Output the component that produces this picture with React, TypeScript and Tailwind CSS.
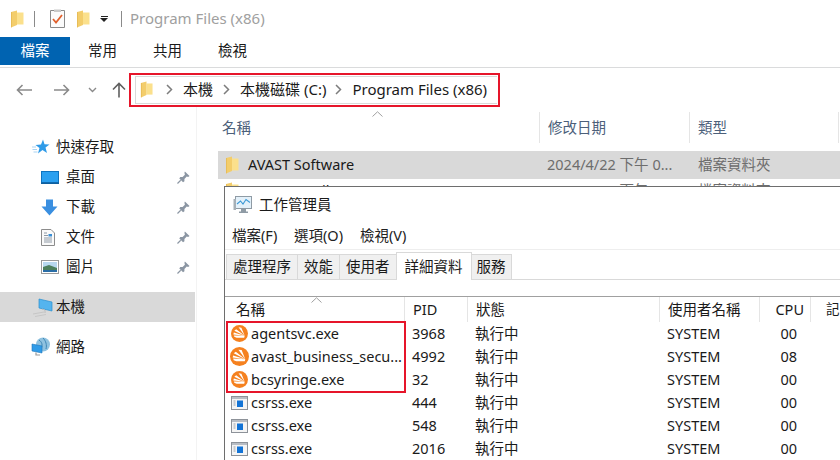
import React from 'react';

const FONT = 'font-["Noto_Sans","Noto_Sans_CJK_TC",sans-serif]';

const Folder = ({ className = '' }: { className?: string }) => (
  <svg viewBox="0 0 14 18" className={className}>
    <path d="M7 2.5 H13.5 V14.5 H7 Z" fill="#fbe08c" />
    <path d="M1 2 L7 0.5 V15 L1 17.5 Z" fill="#f3cd6b" />
    <path d="M1 2 H2 V17 L1 17.5 Z" fill="#e8bd58" />
  </svg>
);

const Checklist = () => (
  <svg viewBox="0 0 15 19" className="h-[19px] w-[15px]">
    <path d="M0.5 1.5 H14.5 V18.5 H0.5 Z" fill="#fbfbfb" stroke="#8a8a8a" />
    <path d="M4 0.5 H11 V3 H4 Z" fill="#c9c9c9" />
    <path d="M3 10 L6 13.5 L12 6" fill="none" stroke="#e0602c" strokeWidth="1.8" />
  </svg>
);

const Pin = () => (
  <svg viewBox="0 0 14 14" className="h-[13px] w-[13px]">
    <path d="M8.5 0.5 L13.5 5.5 L12 6.5 L10.5 6 L8 8.5 L8 11 L6.5 12 L2.5 8 L3.5 6.5 L6 6.5 L8.5 4 L8 2 Z" fill="#8b96a3" />
    <path d="M4 10 L0.5 13.5" stroke="#8b96a3" strokeWidth="1.3" />
  </svg>
);

const Chevron = () => (
  <svg viewBox="0 0 7 11" className="h-[11px] w-[7px]">
    <path d="M1 1 L5.5 5.5 L1 10" fill="none" stroke="#7d7d7d" strokeWidth="1.5" />
  </svg>
);

const SortCaret = () => (
  <svg viewBox="0 0 11 6" className="h-[6px] w-[11px]">
    <path d="M0.5 5.5 L5.5 0.8 L10.5 5.5" fill="none" stroke="#a0a0a0" />
  </svg>
);

const Arrow = ({ dir, dark }: { dir: 'left' | 'right' | 'up'; dark?: boolean }) => {
  const color = dark ? '#5f5f5f' : '#8a8a8a';
  if (dir === 'up') {
    return (
      <svg viewBox="0 0 14 16" className="h-4 w-[14px]">
        <path d="M7 15.5 V1.5 M1 7.5 L7 1.5 L13 7.5" fill="none" stroke={color} strokeWidth="1.6" />
      </svg>
    );
  }
  const d = dir === 'left' ? 'M16 6 H1.5 M6.5 1 L1.5 6 L6.5 11' : 'M0 6 H14.5 M9.5 1 L14.5 6 L9.5 11';
  return (
    <svg viewBox="0 0 16 12" className="h-3 w-4">
      <path d={d} fill="none" stroke={color} strokeWidth="1.6" />
    </svg>
  );
};

const Star = () => (
  <svg viewBox="0 0 18 16" className="h-4 w-[18px]">
    <path d="M11 0.5 L12.5 5.2 L17.5 5.5 L13.5 8.6 L15 14 L10.5 11 L6 14.5 L7.5 9 L3.5 6 L9 5.4 Z" fill="#2f9be8" />
    <path d="M0 8 H4 M0.5 10.5 H5 M1.5 13 H5.5" stroke="#a9d3f2" />
  </svg>
);

const Desktop = () => (
  <svg viewBox="0 0 18 13" className="h-[13px] w-[18px]">
    <rect width="18" height="13" fill="#1a8ce0" />
    <rect x="0.5" y="0.5" width="17" height="11" fill="#2ba0f0" stroke="#0f74c0" />
    <rect x="0" y="11.5" width="18" height="1.5" fill="#0e5f9e" />
  </svg>
);

const Download = () => (
  <svg viewBox="0 0 17 17" className="h-[17px] w-[17px]">
    <path d="M5 0.5 H12 V7.5 H16.5 L8.5 16.5 L0.5 7.5 H5 Z" fill="#3a8fe0" />
  </svg>
);

const Doc = () => (
  <svg viewBox="0 0 14 17" className="h-[17px] w-[14px]">
    <path d="M0.5 0.5 H10 L13.5 4 V16.5 H0.5 Z" fill="#fafafa" stroke="#8c8c8c" />
    <path d="M3 4 H6 M3 6.5 H7 M3 9 H11 M3 11 H11 M3 13 H11" stroke="#8f9aa6" />
    <rect x="7.5" y="5" width="3.5" height="2.5" fill="#3b8fd6" />
  </svg>
);

const Pictures = () => (
  <svg viewBox="0 0 18 14" className="h-[14px] w-[18px]">
    <rect x="0.5" y="0.5" width="17" height="13" fill="#fff" stroke="#9a9a9a" />
    <rect x="2" y="2" width="14" height="10" fill="#b8d8ef" />
    <path d="M2 7 L8 5 L16 8 V12 H2 Z" fill="#4d7f5c" />
    <path d="M2 10 H16 V12 H2 Z" fill="#2a6da6" />
  </svg>
);

const ThisPc = () => (
  <svg viewBox="0 0 21 19" className="h-[19px] w-[21px]">
    <path d="M7 1 L20 4 V13 L7 10 Z" fill="#55b4ee" stroke="#2a8fd0" strokeWidth="0.7" />
    <path d="M10 11 L13 12 V15" fill="none" stroke="#bcbcbc" />
    <path d="M1 16 L12 14 M3 18.5 L14 16.5" stroke="#c6c6c6" />
  </svg>
);

const Network = () => (
  <svg viewBox="0 0 20 20" className="h-5 w-5">
    <circle cx="12" cy="7.5" r="7" fill="#8fc2e0" />
    <path d="M8 3 C11 5 12 8 10 12 M12 1 C15 4 16 8 15 12" fill="none" stroke="#3d86b5" />
    <path d="M1 7 L11 9 V16 L1 14 Z" fill="#2f9be8" stroke="#1b76bb" strokeWidth="0.6" />
    <path d="M5 15.5 V18 H9" fill="none" stroke="#9a9a9a" strokeWidth="1.2" />
  </svg>
);

const TaskIcon = () => (
  <svg viewBox="0 0 19 18" className="h-[18px] w-[19px]">
    <rect x="2.5" y="0.5" width="16" height="12" fill="#e4f1fa" stroke="#8f9ba5" />
    <path d="M4 8 L7.5 5 L10 8 L13 3.5 L17 6.5" fill="none" stroke="#3d9ad6" strokeWidth="1.1" />
    <rect x="0.5" y="3" width="2.5" height="11" fill="#a6afb6" />
    <path d="M8 13 H13 V15.5 H15 V17 H6 V15.5 H8 Z" fill="#8f9ba5" />
  </svg>
);

const Avast = ({ big }: { big?: boolean }) => (
  <svg viewBox="0 0 18 18" className={big ? 'h-[19px] w-[19px]' : 'h-[17px] w-[17px]'}>
    <circle cx="9" cy="9" r="9" fill="#f5811f" />
    <path d="M8 2.5 L11 2.8 L14.5 11.5 Z M3.5 6 L5.5 4.5 L14.5 11.5 Z M2.5 10 L3 8 L14.5 11.5 Z M3.5 12.5 L3 11 L14.5 11.5 L14 13.5 L6 13.5 Z" fill="#fff" />
  </svg>
);

const ProcessIcon = () => (
  <svg viewBox="0 0 17 14" className="h-[14px] w-[17px]">
    <rect x="0.5" y="0.5" width="16" height="13" fill="#f4f4f4" stroke="#8d9299" />
    <path d="M1 1 H16 V3 H1 Z" fill="#b8bdc4" />
    <rect x="6" y="4.5" width="6" height="6.5" fill="#1273d6" />
    <path d="M2.5 5 H4.5 M2.5 7 H4.5 M2.5 9 H4.5" stroke="#9aa0a8" />
  </svg>
);

const navItems = [
  { label: '桌面', icon: <Desktop /> },
  { label: '下載', icon: <Download /> },
  { label: '文件', icon: <Doc /> },
  { label: '圖片', icon: <Pictures /> },
];

const processes = [
  { name: 'agentsvc.exe', pid: '3968', cpu: '00', icon: <Avast /> },
  { name: 'avast_business_secu...', pid: '4992', cpu: '08', icon: <Avast big /> },
  { name: 'bcsyringe.exe', pid: '32', cpu: '00', icon: <Avast /> },
  { name: 'csrss.exe', pid: '444', cpu: '00', icon: <ProcessIcon /> },
  { name: 'csrss.exe', pid: '548', cpu: '00', icon: <ProcessIcon /> },
  { name: 'csrss.exe', pid: '2016', cpu: '00', icon: <ProcessIcon /> },
];

const tmTabs = ['處理程序', '效能', '使用者'];
const GRID = 'grid grid-cols-[179px_63px_192px_100px_51px_1fr]';

const TaskManager = () => (
  <div className="absolute left-[224px] top-[186px] flex h-[274px] w-[616px] flex-col border-l border-t border-[#6e6e6e] bg-white text-[14.5px] text-[#1a1a1a]">
    <div className="flex h-[36px] items-center gap-[7px] pl-2">
      <TaskIcon />
      <span>工作管理員</span>
    </div>
    <div className="flex h-[26px] items-center gap-[15px] pl-[7px] text-[#222]">
      <span className="w-[47px] whitespace-nowrap">檔案(F)</span>
      <span className="w-[51px] whitespace-nowrap">選項(O)</span>
      <span className="whitespace-nowrap">檢視(V)</span>
    </div>
    <div className="flex h-[31px] items-end border-b border-t border-b-[#d9d9d9] border-t-[#eeeeee] pl-px pt-[4px]">
      {tmTabs.map(t => (
        <div key={t} className="-mr-px flex h-[25px] items-center border border-b-0 border-[#d9d9d9] bg-[#f0f0f0] px-[6px]">{t}</div>
      ))}
      <div className="relative z-10 -mb-px -mr-px flex h-[28px] items-center border border-b-0 border-[#d9d9d9] bg-white px-2">詳細資料</div>
      <div className="flex h-[25px] items-center border border-b-0 border-[#d9d9d9] bg-[#f0f0f0] px-[5px]">服務</div>
    </div>
    <div className="h-[16px]" />
    <div className={`${GRID} h-[26px] items-center border-t border-[#a0a0a0]`}>
      <div className="relative flex h-full items-center pl-[11px]">
        名稱
        <span className="absolute left-[86px] top-0 flex"><SortCaret /></span>
      </div>
      <div className="flex h-full items-center border-l border-[#e5e5e5] pl-2">PID</div>
      <div className="flex h-full items-center border-l border-[#e5e5e5] pl-2">狀態</div>
      <div className="flex h-full items-center border-l border-[#e5e5e5] pl-2">使用者名稱</div>
      <div className="flex h-full items-center justify-end border-l border-[#e5e5e5] pr-[6px]">CPU</div>
      <div className="flex h-full items-center border-l border-[#e5e5e5] pl-[15px] text-[13.5px]">記</div>
    </div>
    <div className="relative">
      {processes.map((p, i) => (
        <div key={i} className={`${GRID} h-[23px] items-center`}>
          <div className="flex items-center">
            <span className="flex w-[26px] justify-center pl-[2px]">{p.icon}</span>
            <span className="whitespace-nowrap">{p.name}</span>
          </div>
          <div className="pl-[8px]">{p.pid}</div>
          <div className="pl-[8px]">執行中</div>
          <div className="pl-[8px]">SYSTEM</div>
          <div className="pr-[13px] text-right">{p.cpu}</div>
          <div />
        </div>
      ))}
      <div className="absolute left-[1px] top-[-1px] h-[72px] w-[180px] border-2 border-[#e6152a]" />
    </div>
  </div>
);

export default function App() {
  return (
    <div className={`${FONT} relative flex h-[460px] w-[840px] flex-col overflow-hidden bg-white text-[#1a1a1a]`}>
      <div className="flex h-[37px] items-center">
        <Folder className="ml-[10px] h-[18px] w-[14px]" />
        <div className="ml-[10px] h-[16px] w-px bg-[#8a8a8a]" />
        <div className="ml-[15px] flex"><Checklist /></div>
        <Folder className="ml-[11px] h-[18px] w-[14px]" />
        <span className="ml-[10px] flex flex-col items-center gap-px">
          <span className="h-px w-[7px] bg-[#222]" />
          <span className="h-0 w-0 border-x-[4px] border-t-[4px] border-x-transparent border-t-[#222]" />
        </span>
        <div className="ml-[13px] h-[16px] w-px bg-[#8a8a8a]" />
        <span className="ml-2 text-[15px] text-[#a0a0a0]">Program Files (x86)</span>
      </div>

      <div className="flex h-[31px] items-start border-b border-[#dadbdc] text-[14.5px]">
        <div className="flex h-[28px] w-[70px] items-center justify-center bg-[#0063b1] text-white">檔案</div>
        <div className="ml-[18px] flex h-[28px] items-center">常用</div>
        <div className="ml-[36px] flex h-[28px] items-center">共用</div>
        <div className="ml-[36px] flex h-[28px] items-center">檢視</div>
      </div>

      <div className="flex h-[39px] items-center pt-[5px]">
        <div className="ml-[16px] flex"><Arrow dir="left" /></div>
        <div className="ml-[22px] flex"><Arrow dir="right" /></div>
        <svg viewBox="0 0 9 6" className="ml-[18px] h-[6px] w-[9px]">
          <path d="M1 1 L4.5 4.5 L8 1" fill="none" stroke="#8a8a8a" strokeWidth="1.4" />
        </svg>
        <div className="ml-[15px] flex"><Arrow dir="up" dark /></div>
        <div className="ml-[3px] h-[34px] w-[371px] border-2 border-[#e6152a] p-px pl-[4px]">
          <div className="flex h-full items-center border border-r-0 border-[#d9d9d9] pb-[2px] pl-[4px] text-[15px]">
            <Folder className="h-[17px] w-[13px]" />
            <span className="ml-[13px] flex"><Chevron /></span>
            <span className="ml-[10px]">本機</span>
            <span className="ml-[10px] flex"><Chevron /></span>
            <span className="ml-[10px] whitespace-nowrap">本機磁碟 (C:)</span>
            <span className="ml-[9px] flex"><Chevron /></span>
            <span className="ml-[10px] whitespace-nowrap">Program Files (x86)</span>
          </div>
        </div>
      </div>

      <div className="flex min-h-0 flex-1">
        <aside className="w-[197px] shrink-0 border-r border-[#f3f3f3] pt-[25px] text-[14.5px]">
          <div className="flex h-[30px] items-center pl-[32px]">
            <Star />
            <span className="ml-[6px]">快速存取</span>
          </div>
          {navItems.map(item => (
            <div key={item.label} className="flex h-[30px] items-center pl-[41px]">
              <span className="flex w-[25px] items-center">{item.icon}</span>
              <span className="flex-1">{item.label}</span>
              <span className="mr-[6px] flex"><Pin /></span>
            </div>
          ))}
          <div className="mt-[10px] flex h-[30px] w-[195px] items-center bg-[#d9d9d9] pl-[32px]">
            <ThisPc />
            <span className="ml-[3px]">本機</span>
          </div>
          <div className="mt-[10px] flex h-[30px] items-center pl-[31px]">
            <Network />
            <span className="ml-[5px]">網路</span>
          </div>
        </aside>

        <main className="min-w-0 flex-1 pl-px text-[14.5px]">
          <div className="relative grid h-[44px] grid-cols-[341px_150px_150px] items-start pt-[5px] text-[#4c607a]">
            <span className="flex h-[31px] items-center pl-[24px]">名稱</span>
            <span className="flex h-[31px] items-center border-l border-[#e5e5e5] pl-2">修改日期</span>
            <span className="flex h-[31px] items-center border-x border-[#e5e5e5] pl-2">類型</span>
            <span className="absolute left-[174px] top-[4px] flex"><SortCaret /></span>
          </div>
          <div className="ml-[20px] grid h-[28px] grid-cols-[320px_150px_1fr] items-center bg-[#d9d9d9]">
            <div className="flex items-center pl-[7px]">
              <Folder className="h-[18px] w-[14px]" />
              <span className="ml-[9px]">AVAST Software</span>
            </div>
            <span className="whitespace-nowrap pl-[9px] text-[#6d6d6d]">2024/4/22 下午 0...</span>
            <span className="pl-[10px] text-[#6d6d6d]">檔案資料夾</span>
          </div>
          <div className="ml-[20px] -mt-[2px] grid h-[28px] grid-cols-[320px_150px_1fr] items-center">
            <div className="flex items-center pl-[7px]">
              <Folder className="h-[18px] w-[14px]" />
              <span className="ml-[9px]">Common Files</span>
            </div>
            <span className="whitespace-nowrap pl-[9px] text-[#6d6d6d]">2024/4/22 下午 0...</span>
            <span className="pl-[10px] text-[#6d6d6d]">檔案資料夾</span>
          </div>
        </main>
      </div>

      <TaskManager />
    </div>
  );
}
